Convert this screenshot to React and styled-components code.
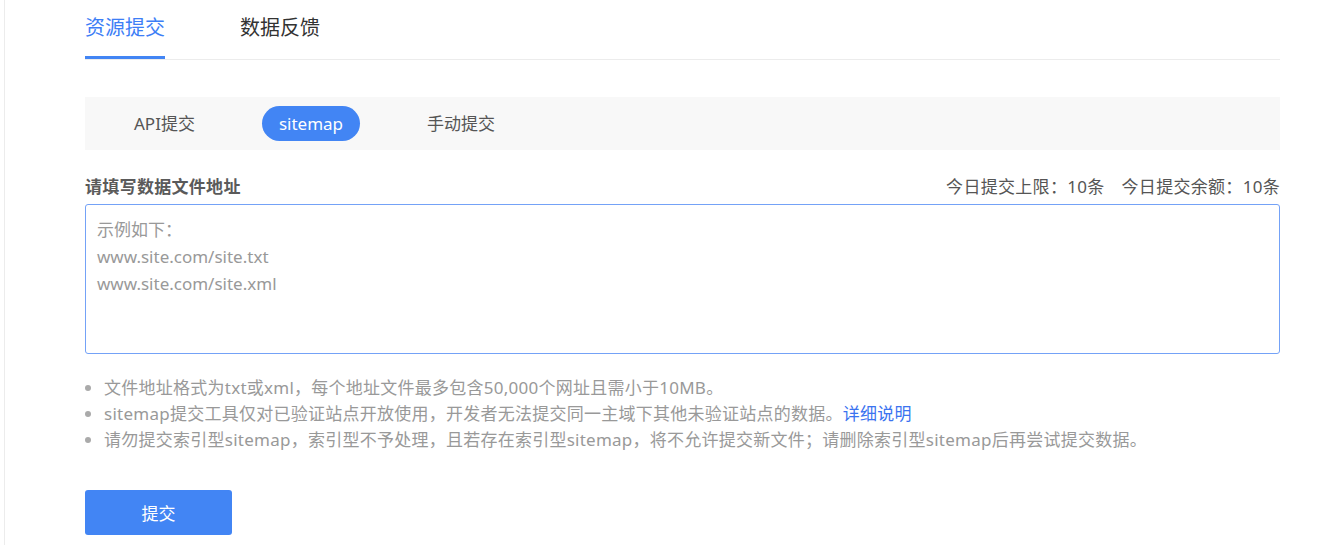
import React from 'react';
import styled, { createGlobalStyle, css } from 'styled-components';

const Blue = '#4285f4';

const GlobalStyle = createGlobalStyle`
  html, body {
    margin: 0;
    padding: 0;
    background: #fff;
  }
  body {
    font-family: 'Noto Sans', 'Noto Sans CJK SC', sans-serif;
    color: #555;
  }
`;

const Page = styled.div`
  margin-left: 4px;
  min-height: 545px;
  border-left: 1px solid #ececec;
  padding: 0 56px 0 80px;
  box-sizing: border-box;
`;

const Tabs = styled.div`
  display: flex;
  gap: 75px;
  border-bottom: 1px solid #ececec;
`;

const Tab = styled.div`
  font-size: 20px;
  line-height: 56px;
  color: #333;
  border-bottom: 3px solid transparent;
  ${(props) =>
    props.active &&
    css`
      color: #3d7ef6;
      border-bottom-color: ${Blue};
    `}
`;

const SubTabs = styled.div`
  margin-top: 37px;
  height: 53px;
  background: #f8f8f8;
  display: flex;
  align-items: center;
  gap: 50px;
  padding-left: 32px;
`;

const SubTab = styled.div`
  height: 35px;
  line-height: 35px;
  padding: 0 17px;
  border-radius: 18px;
  font-size: 17px;
  color: #555;
  ${(props) =>
    props.active &&
    css`
      background: ${Blue};
      color: #fff;
    `}
`;

const LabelRow = styled.div`
  margin-top: 25px;
  margin-bottom: 5px;
  display: flex;
  justify-content: space-between;
  align-items: center;
  line-height: 24px;
  font-size: 17px;
  letter-spacing: 0.3px;
`;

const Label = styled.div`
  font-weight: bold;
  color: #5a5a5a;
`;

const Quota = styled.div`
  color: #555;
  display: flex;
  gap: 17px;
`;

const TextArea = styled.textarea`
  display: block;
  width: 100%;
  height: 150px;
  box-sizing: border-box;
  border: 1px solid #74a2f7;
  border-radius: 3px;
  padding: 11px 11px;
  resize: none;
  outline: none;
  font-family: 'Noto Sans', 'Noto Sans CJK SC', sans-serif;
  font-size: 17px;
  line-height: 27px;
  color: #333;
  &::placeholder {
    color: #999;
  }
`;

const Tips = styled.ul`
  margin: 21px 0 0;
  padding-left: 19px;
  list-style: disc;
  color: #999;
  font-size: 17px;
  line-height: 26px;
  letter-spacing: 0.25px;
  li::marker {
    color: #aaa;
  }
`;

const TipLink = styled.a`
  color: #3b73f0;
  text-decoration: none;
`;

const SubmitButton = styled.button`
  margin-top: 37px;
  width: 147px;
  height: 45px;
  border: none;
  border-radius: 3px;
  background: ${Blue};
  color: #fff;
  font-family: 'Noto Sans', 'Noto Sans CJK SC', sans-serif;
  font-size: 17px;
  cursor: pointer;
`;

export default function App() {
  return (
    <Page>
      <GlobalStyle />
      <Tabs>
        <Tab active>资源提交</Tab>
        <Tab>数据反馈</Tab>
      </Tabs>
      <SubTabs>
        <SubTab>API提交</SubTab>
        <SubTab active>sitemap</SubTab>
        <SubTab>手动提交</SubTab>
      </SubTabs>
      <LabelRow>
        <Label>请填写数据文件地址</Label>
        <Quota>
          <span>今日提交上限：10条</span>
          <span>今日提交余额：10条</span>
        </Quota>
      </LabelRow>
      <TextArea placeholder={'示例如下：\nwww.site.com/site.txt\nwww.site.com/site.xml'} />
      <Tips>
        <li>文件地址格式为txt或xml，每个地址文件最多包含50,000个网址且需小于10MB。</li>
        <li>
          sitemap提交工具仅对已验证站点开放使用，开发者无法提交同一主域下其他未验证站点的数据。
          <TipLink href="#">详细说明</TipLink>
        </li>
        <li>请勿提交索引型sitemap，索引型不予处理，且若存在索引型sitemap，将不允许提交新文件；请删除索引型sitemap后再尝试提交数据。</li>
      </Tips>
      <SubmitButton>提交</SubmitButton>
    </Page>
  );
}
